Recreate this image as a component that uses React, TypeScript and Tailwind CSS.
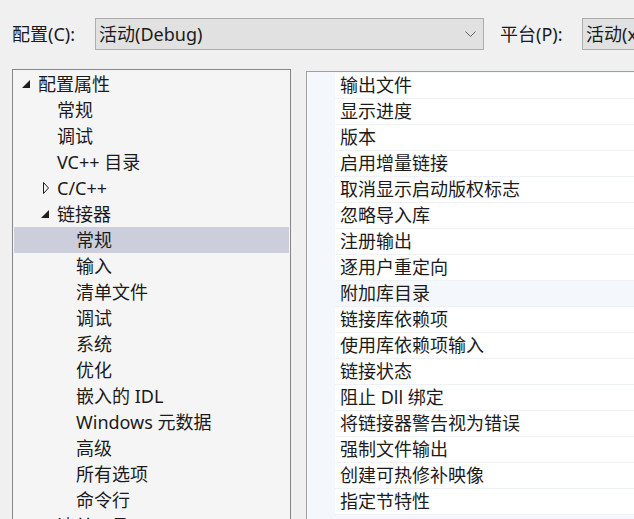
const font = { fontFamily: '"Noto Sans", "Noto Sans CJK SC", sans-serif' };

type TreeItem = { label: string; level: number; arrow?: 'open' | 'closed'; selected?: boolean };

const tree: TreeItem[] = [
  { label: '配置属性', level: 0, arrow: 'open' },
  { label: '常规', level: 1 },
  { label: '调试', level: 1 },
  { label: 'VC++ 目录', level: 1 },
  { label: 'C/C++', level: 1, arrow: 'closed' },
  { label: '链接器', level: 1, arrow: 'open' },
  { label: '常规', level: 2, selected: true },
  { label: '输入', level: 2 },
  { label: '清单文件', level: 2 },
  { label: '调试', level: 2 },
  { label: '系统', level: 2 },
  { label: '优化', level: 2 },
  { label: '嵌入的 IDL', level: 2 },
  { label: 'Windows 元数据', level: 2 },
  { label: '高级', level: 2 },
  { label: '所有选项', level: 2 },
  { label: '命令行', level: 2 },
  { label: '清单工具', level: 1, arrow: 'closed' },
];

const props = [
  '输出文件',
  '显示进度',
  '版本',
  '启用增量链接',
  '取消显示启动版权标志',
  '忽略导入库',
  '注册输出',
  '逐用户重定向',
  '附加库目录',
  '链接库依赖项',
  '使用库依赖项输入',
  '链接状态',
  '阻止 Dll 绑定',
  '将链接器警告视为错误',
  '强制文件输出',
  '创建可热修补映像',
  '指定节特性',
];

function Arrow({ kind }: { kind?: 'open' | 'closed' }) {
  if (kind === 'open')
    return (
      <svg width="10" height="10" viewBox="0 0 10 10">
        <polygon points="9,1 9,9 1,9" fill="#1e1e1e" />
      </svg>
    );
  if (kind === 'closed')
    return (
      <svg width="10" height="12" viewBox="0 0 10 12" className="ml-[2px]">
        <polygon points="1.5,0.5 6.5,6 1.5,11.5" fill="none" stroke="#1e1e1e" strokeWidth="1" />
      </svg>
    );
  return null;
}

export default function App() {
  return (
    <div className="w-[634px] h-[519px] bg-[#f0f0f0] overflow-hidden text-[#1b1b1b]" style={font}>
      <div className="flex items-center pt-[18px] h-[50px]">
        <span className="w-[95px] pl-[12px] text-[18px] shrink-0">配置(C):</span>
        <div className="h-[32px] w-[389px] border border-[#adadad] bg-[#e1e1e1] flex items-center pl-[3px] pr-[7px] text-[18px] shrink-0">
          <span className="flex-1">活动(Debug)</span>
          <svg width="11" height="7" viewBox="0 0 11 7">
            <polyline points="0.5,0.5 5.5,5.5 10.5,0.5" fill="none" stroke="#606060" strokeWidth="1" />
          </svg>
        </div>
        <span className="ml-[16px] w-[82px] text-[18px] shrink-0">平台(P):</span>
        <div className="h-[32px] w-[120px] border border-[#adadad] bg-[#e1e1e1] flex items-center pl-[3px] text-[18px] shrink-0 whitespace-nowrap">
          活动(x64)
        </div>
      </div>

      <div className="flex mt-[19px] h-[450px]">
        <div className="ml-[12px] w-[279px] h-[460px] border border-[#828790] bg-[#f5f5f5] p-[1px] shrink-0 overflow-hidden">
          {tree.map((t, i) => (
            <div
              key={i}
              className={`h-[26px] flex items-center text-[18px] whitespace-nowrap ${t.selected ? 'bg-[#cccedb]' : ''}`}
              style={{ paddingLeft: 7 + t.level * 19 }}
            >
              <span className="w-[17px] flex items-center shrink-0">
                <Arrow kind={t.arrow} />
              </span>
              <span>{t.label}</span>
            </div>
          ))}
        </div>

        <div className="ml-[15px] mt-[2px] flex-1 border-l border-t border-[#a0a0a0] bg-[#f4f7fc] pt-[1px] overflow-hidden">
          {props.map((p, i) => (
            <div key={i} className="flex h-[26px]">
              <div className="w-[28px] shrink-0" />
              <div
                className={`flex-1 flex items-center pl-[5px] text-[18px] whitespace-nowrap border-b border-[#eef2f8] ${i === 8 ? 'bg-[#f4f7fc]' : 'bg-white'}`}
              >
                {p}
              </div>
            </div>
          ))}
        </div>
      </div>
    </div>
  );
}
